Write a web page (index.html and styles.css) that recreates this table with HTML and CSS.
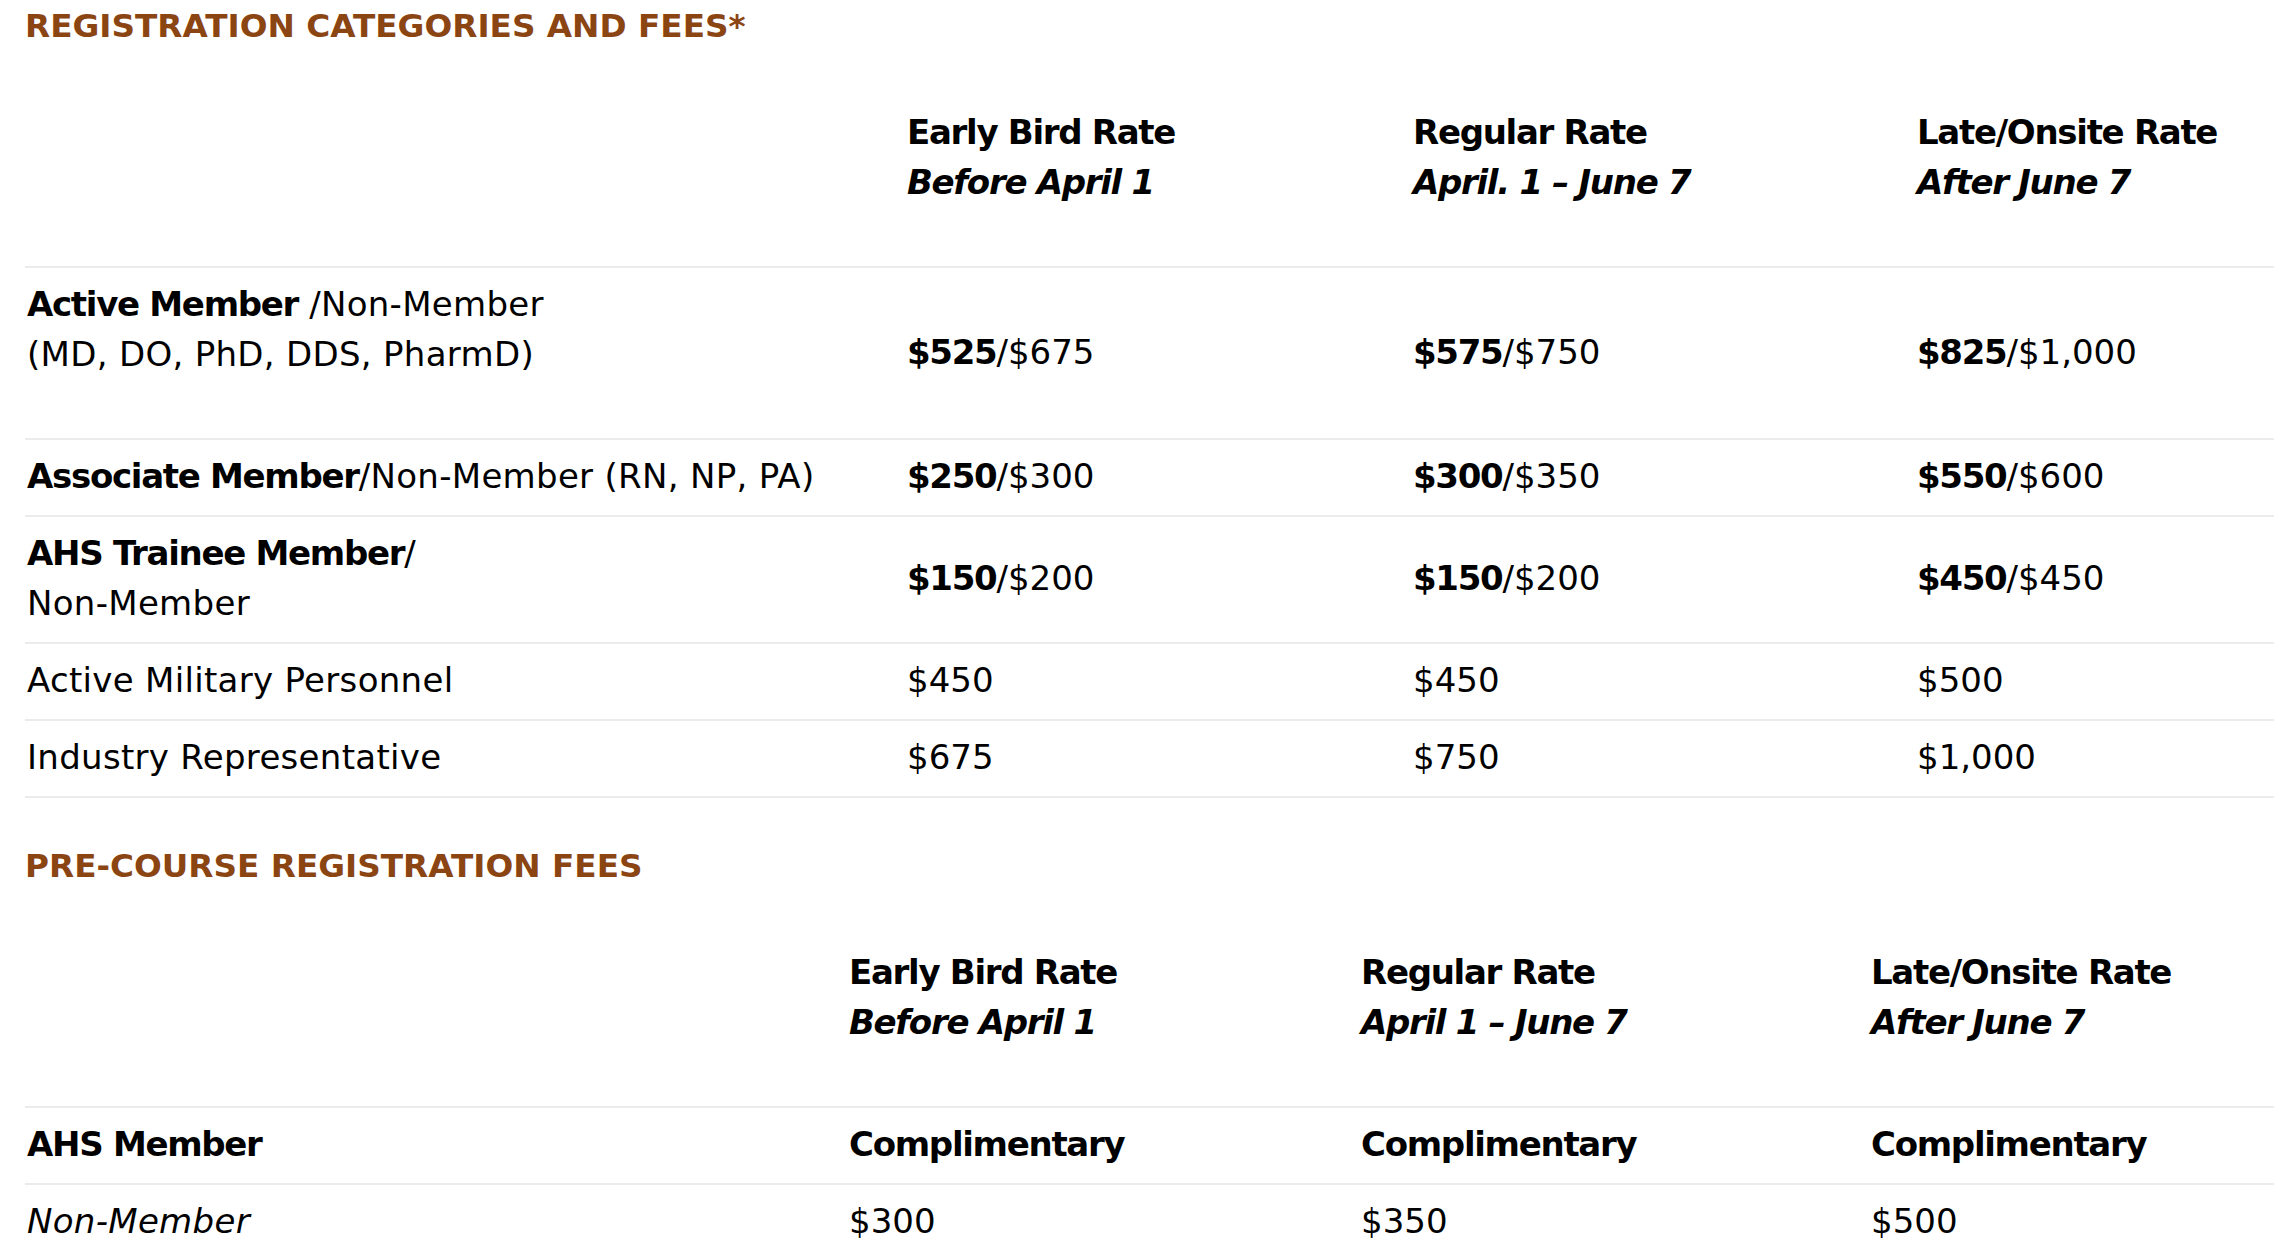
FILE: index.html
```html
<!DOCTYPE html>
<html lang="en">
<head>
<meta charset="utf-8">
<title>Registration Categories and Fees</title>
<link rel="stylesheet" href="styles.css">
</head>
<body>
<section class="fees">
  <h2 class="fees-title">REGISTRATION CATEGORIES AND FEES*</h2>
  <table class="fee-table">
    <colgroup>
      <col class="main-c1"><col class="main-c2"><col class="main-c3"><col>
    </colgroup>
    <thead>
      <tr>
        <th></th>
        <th>Early Bird Rate<br><em>Before April 1</em></th>
        <th>Regular Rate<br><em>April. 1 – June 7</em></th>
        <th>Late/Onsite Rate<br><em>After June 7</em></th>
      </tr>
    </thead>
    <tbody>
      <tr>
        <td class="label tall"><strong>Active Member</strong> /Non-Member<br>(MD, DO, PhD, DDS, PharmD)</td>
        <td><strong>$525</strong>/$675</td>
        <td><strong>$575</strong>/$750</td>
        <td><strong>$825</strong>/$1,000</td>
      </tr>
      <tr>
        <td class="label"><strong>Associate Member</strong>/Non-Member (RN, NP, PA)</td>
        <td><strong>$250</strong>/$300</td>
        <td><strong>$300</strong>/$350</td>
        <td><strong>$550</strong>/$600</td>
      </tr>
      <tr>
        <td class="label"><strong>AHS Trainee Member</strong>/<br>Non-Member</td>
        <td><strong>$150</strong>/$200</td>
        <td><strong>$150</strong>/$200</td>
        <td><strong>$450</strong>/$450</td>
      </tr>
      <tr>
        <td class="label">Active Military Personnel</td>
        <td>$450</td>
        <td>$450</td>
        <td>$500</td>
      </tr>
      <tr>
        <td class="label">Industry Representative</td>
        <td>$675</td>
        <td>$750</td>
        <td>$1,000</td>
      </tr>
    </tbody>
  </table>

  <h2 class="fees-title fees-title--next">PRE-COURSE REGISTRATION FEES</h2>
  <table class="fee-table">
    <colgroup>
      <col class="pre-c1"><col class="pre-c2"><col class="pre-c3"><col>
    </colgroup>
    <thead>
      <tr>
        <th></th>
        <th>Early Bird Rate<br><em>Before April 1</em></th>
        <th>Regular Rate<br><em>April 1 – June 7</em></th>
        <th>Late/Onsite Rate<br><em>After June 7</em></th>
      </tr>
    </thead>
    <tbody>
      <tr>
        <td class="label"><strong>AHS Member</strong></td>
        <td><strong>Complimentary</strong></td>
        <td><strong>Complimentary</strong></td>
        <td><strong>Complimentary</strong></td>
      </tr>
      <tr>
        <td class="label"><em>Non-Member</em></td>
        <td>$300</td>
        <td>$350</td>
        <td>$500</td>
      </tr>
    </tbody>
  </table>
</section>
</body>
</html>
```

FILE: styles.css
```css
html {
  overflow: hidden;
}

body {
  margin: 0;
  padding: 0 0 0 25px;
  background: #ffffff;
  color: #000000;
  font-family: "DejaVu Sans", "Liberation Sans", sans-serif;
  font-size: 34px;
  line-height: 50px;
}

.fees-title {
  margin: 7px 0 51px;
  font-size: 32.7px;
  line-height: 38px;
  font-weight: 700;
  color: #8b4513;
}

.fees-title--next {
  margin-top: 49px;
}

.fee-table {
  width: 100%;
  table-layout: fixed;
  border-collapse: separate;
  border-spacing: 0;
}

.main-c1 { width: 880px; }
.main-c2 { width: 506px; }
.main-c3 { width: 504px; }

.pre-c1 { width: 822px; }
.pre-c2 { width: 512px; }
.pre-c3 { width: 510px; }

.fee-table th,
.fee-table td {
  padding: 11px 0 14px 2px;
  border-bottom: 2px solid #ebebeb;
  text-align: left;
  vertical-align: middle;
  font-weight: 400;
  white-space: nowrap;
}

.fee-table th {
  padding-bottom: 59px;
  vertical-align: top;
  font-weight: 700;
  letter-spacing: -1.3px;
}

.fee-table td.label {
  letter-spacing: 0.3px;
}

.fee-table td.tall {
  padding-bottom: 59px;
}

.fee-table strong {
  font-weight: 700;
  letter-spacing: -1.3px;
}

.fee-table em {
  font-style: italic;
}
```
